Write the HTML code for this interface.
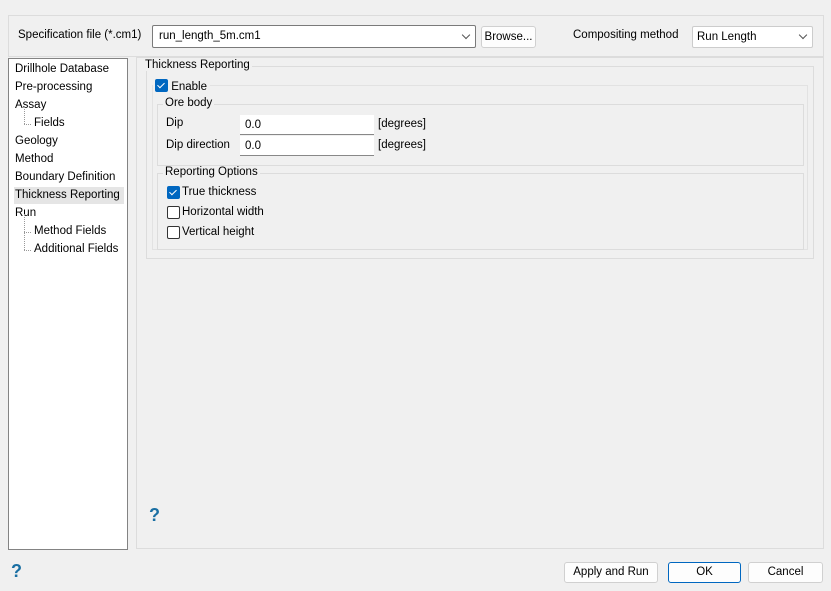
<!DOCTYPE html>
<html><head><style>
body{margin:0;width:831px;height:591px;background:#f0f0f0;font-family:"Liberation Sans",sans-serif;font-size:11.5px;color:#000;position:relative;overflow:hidden}
.a{position:absolute}
.box{position:absolute;border:1px solid #dcdcdc}
.lbl{position:absolute;background:#f0f0f0;padding:0 2px;white-space:nowrap}
.cb{position:absolute;width:11px;height:11px;border:1px solid #333;border-radius:2px;background:#fff}
.cb.on{background:#0067c0;border-color:#0067c0}
.cb.on:after{content:"";position:absolute;left:3px;top:1px;width:3px;height:6px;border:solid #fff;border-width:0 1.3px 1.3px 0;transform:rotate(45deg)}
.inp{position:absolute;background:#fff;border-bottom:1px solid #888;height:20px;line-height:20px;padding-left:5px;box-sizing:border-box}
.btn{position:absolute;background:#fdfdfd;border:1px solid #d0d0d0;border-radius:3px;text-align:center;box-sizing:border-box;height:21px;line-height:19px}
.q{position:absolute;color:#1a6fa3;font-weight:bold;font-size:18px}
.tree div{position:absolute;left:6px;white-space:nowrap}
.chev{position:absolute;width:5px;height:5px;border:solid #555;border-width:0 1px 1px 0;transform:rotate(45deg)}
</style></head><body>
<div class="box" style="left:8px;top:15px;width:814px;height:40px"></div>
<div class="a" style="left:18px;top:29px">Specification file (*.cm1)</div>
<div class="a" style="left:152px;top:25px;width:324px;height:23px;background:#fff;border:1px solid #7a7a7a;box-sizing:border-box;border-radius:2px"><span class="a" style="left:6px;top:4px">run_length_5m.cm1</span><span class="chev" style="left:310px;top:6px"></span></div>
<div class="btn" style="left:481px;top:26px;width:55px;height:22px;line-height:20px">Browse...</div>
<div class="a" style="left:573px;top:29px">Compositing method</div>
<div class="a" style="left:692px;top:26px;width:121px;height:22px;background:#fff;border:1px solid #ccc;box-sizing:border-box;border-radius:2px"><span class="a" style="left:4px;top:4px">Run Length</span><span class="chev" style="left:107px;top:5px"></span></div>

<div class="a tree" style="left:8px;top:58px;width:118px;height:490px;background:#fff;border:1px solid #838383">
<div style="top:4px">Drillhole Database</div>
<div style="top:22px">Pre-processing</div>
<div style="top:40px">Assay</div>
<div style="top:58px;left:25px">Fields</div>
<div style="top:76px">Geology</div>
<div style="top:94px">Method</div>
<div style="top:112px">Boundary Definition</div>
<div style="top:128px;left:5px;width:110px;height:17px;background:#e5e5e5"></div>
<div style="top:130px">Thickness Reporting</div>
<div style="top:148px">Run</div>
<div style="top:166px;left:25px">Method Fields</div>
<div style="top:184px;left:25px">Additional Fields</div>
<div style="top:47px;left:15px;width:0;height:18px;border-left:1px dotted #999"></div>
<div style="top:65px;left:15px;width:7px;border-top:1px dotted #999"></div>
<div style="top:155px;left:15px;width:0;height:36px;border-left:1px dotted #999"></div>
<div style="top:173px;left:15px;width:7px;border-top:1px dotted #999"></div>
<div style="top:191px;left:15px;width:7px;border-top:1px dotted #999"></div>
</div>

<div class="box" style="left:136px;top:57px;width:686px;height:490px"></div>
<div class="box" style="left:146px;top:66px;width:666px;height:191px"></div>
<div class="lbl" style="left:143px;top:59px">Thickness Reporting</div>
<div class="box" style="left:152px;top:85px;width:654px;height:163px;border-color:#e2e2e2"></div>
<div class="lbl" style="left:153px;top:79px;padding-left:2px;padding-right:3px"><span class="cb on" style="position:relative;display:inline-block;vertical-align:-2px;left:0;top:0"></span> Enable</div>
<div class="box" style="left:157px;top:104px;width:645px;height:60px"></div>
<div class="lbl" style="left:163px;top:97px">Ore body</div>
<div class="a" style="left:166px;top:117px">Dip</div>
<div class="inp" style="left:240px;top:115px;width:134px">0.0</div>
<div class="a" style="left:378px;top:118px">[degrees]</div>
<div class="a" style="left:166px;top:139px">Dip direction</div>
<div class="inp" style="left:240px;top:136px;width:134px">0.0</div>
<div class="a" style="left:378px;top:139px">[degrees]</div>
<div class="box" style="left:157px;top:173px;width:645px;height:75px"></div>
<div class="lbl" style="left:163px;top:166px">Reporting Options</div>
<div class="cb on" style="left:167px;top:186px"></div><div class="a" style="left:182px;top:186px">True thickness</div>
<div class="cb" style="left:167px;top:206px"></div><div class="a" style="left:182px;top:206px">Horizontal width</div>
<div class="cb" style="left:167px;top:226px"></div><div class="a" style="left:182px;top:226px">Vertical height</div>

<div class="q" style="left:149px;top:505px">?</div>
<div class="q" style="left:11px;top:561px">?</div>
<div class="btn" style="left:564px;top:562px;width:94px">Apply and Run</div>
<div class="btn" style="left:668px;top:562px;width:73px;border:1px solid #0067c0">OK</div>
<div class="btn" style="left:748px;top:562px;width:75px">Cancel</div>
</body></html>
